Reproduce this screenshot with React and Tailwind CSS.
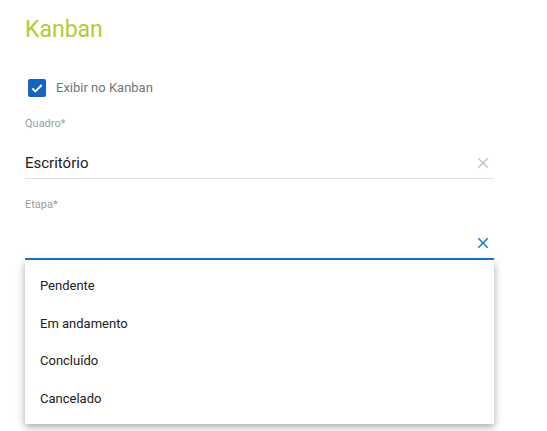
import React, { useState } from 'react';

const XIcon = ({ className }) => (
  <svg viewBox="0 0 24 24" className={className} fill="currentColor">
    <path d="M19 6.41 17.59 5 12 10.59 6.41 5 5 6.41 10.59 12 5 17.59 6.41 19 12 13.41 17.59 19 19 17.59 13.41 12z" />
  </svg>
);

const App = () => {
  const [show, setShow] = useState(true);
  const etapas = ['Pendente', 'Em andamento', 'Concluído', 'Cancelado'];

  return (
    <div className="w-[547px] h-[431px] bg-white font-['Roboto',sans-serif] overflow-hidden">
      <div className="pl-[25px] w-[494px] pt-[14px]">
        <h1 className="text-[23px] leading-[32px] text-[#b3cb34]">Kanban</h1>

        <label className="flex items-center mt-[31px] ml-[3px] h-[21px] cursor-pointer" onClick={() => setShow(!show)}>
          <span className={`w-[18px] h-[18px] rounded-[2px] flex items-center justify-center ${show ? 'bg-[#1565c0]' : 'border-2 border-[#757575]'}`}>
            {show && (
              <svg viewBox="0 0 24 24" className="w-[16px] h-[16px]" fill="none" stroke="white" strokeWidth="3">
                <path d="M5 12.5l4.5 4.5L19 7.5" />
              </svg>
            )}
          </span>
          <span className="ml-[10px] text-[13px] text-[#757575]">Exibir no Kanban</span>
        </label>

        <div className="mt-[19px]">
          <div className="text-[11px] leading-[14px] text-[#9e9e9e]">Quadro*</div>
          <div className="flex items-end justify-between h-[38px] mt-[10px] pb-[4px] border-b border-[#e0e0e0]">
            <span className="text-[15px] leading-[22px] text-[#212121]">Escritório</span>
            <XIcon className="w-[18px] h-[18px] text-[#c4c4c4] mr-[2px] mb-[2px]" />
          </div>
        </div>

        <div className="mt-[19px]">
          <div className="text-[11px] leading-[14px] text-[#9e9e9e]">Etapa*</div>
          <div className="flex items-end justify-end h-[38px] mt-[10px] pb-[6px] border-b-2 border-[#1976d2]">
            <XIcon className="w-[18px] h-[18px] text-[#1976d2] mr-[2px]" />
          </div>
        </div>

        <ul className="bg-white shadow-[0_3px_8px_rgba(0,0,0,0.35)] py-[7px]">
          {etapas.map((e) => (
            <li key={e} className="h-[37.5px] flex items-center px-[15px] text-[13px] text-[#212121]">
              {e}
            </li>
          ))}
        </ul>
      </div>
    </div>
  );
};

export default App;
